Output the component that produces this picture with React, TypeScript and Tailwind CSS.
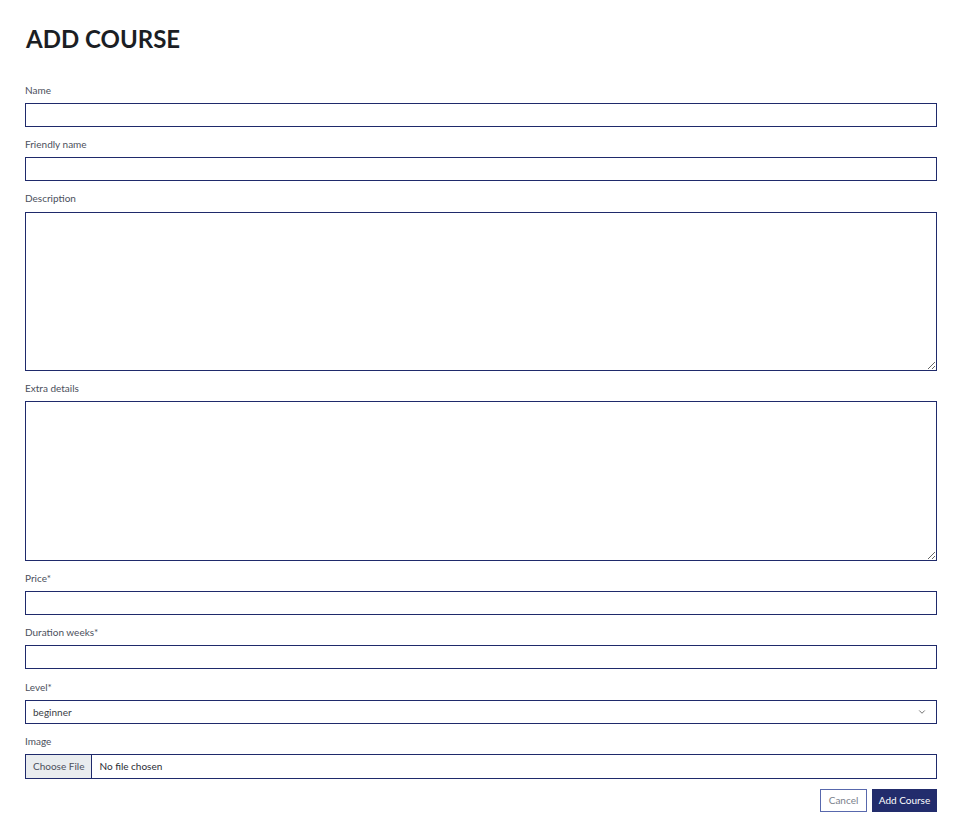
import { ChevronDown } from "lucide-react";

const font = { fontFamily: "Lato, 'Noto Sans', sans-serif" };

function Label({ children, extra = "" }: { children: React.ReactNode; extra?: string }) {
  return <label className={`block text-[10px] leading-[13px] text-[#4b4f5c] mb-[6px] ${extra}`}>{children}</label>;
}

function TextField({ label }: { label: string }) {
  return (
    <div className="mb-[11px]">
      <Label>{label}</Label>
      <input type="text" className="block w-full h-[24px] border border-[#1f2a6b] bg-white px-2 text-[11px] outline-none" />
    </div>
  );
}

function TextArea({ label, h, extra = "" }: { label: string; h: string; extra?: string }) {
  return (
    <div className="mb-[11px]">
      <Label extra={extra}>{label}</Label>
      <textarea className={`block w-full ${h} border border-[#1f2a6b] bg-white px-2 py-1 text-[11px] outline-none resize-y`} />
    </div>
  );
}

export default function App() {
  return (
    <div className="min-h-screen bg-white text-[#212529]" style={font}>
      <div className="px-[25px] pt-[24px] w-[962px]">
        <h1 className="text-[24px] leading-[30px] font-bold text-[#1b1e24] mb-[30px] pl-[1px]">ADD COURSE</h1>
        <form>
          <TextField label="Name" />
          <TextField label="Friendly name" />
          <TextArea label="Description" h="h-[159px]" extra="pb-[1px]" />
          <TextArea label="Extra details" h="h-[160px]" />
          <TextField label="Price*" />
          <TextField label="Duration weeks*" />
          <div className="mb-[11px] pt-[1px]">
            <Label>Level*</Label>
            <div className="flex items-center justify-between w-full h-[24px] border border-[#1f2a6b] bg-white pl-[7px] pr-[9px]">
              <span className="text-[10px] text-[#3a3d46]">beginner</span>
              <ChevronDown className="w-[10px] h-[10px] text-[#555]" strokeWidth={2} />
            </div>
          </div>
          <div className="mb-[10px]">
            <Label>Image</Label>
            <div className="flex items-stretch w-full h-[25px] border border-[#1f2a6b] bg-white">
              <span className="flex items-center px-[7px] bg-[#e9ecef] border-r border-[#1f2a6b] text-[10px] text-[#4b4f5c]">Choose File</span>
              <span className="flex items-center pl-[7px] text-[10px] text-[#2a2d36]">No file chosen</span>
            </div>
          </div>
          <div className="flex justify-end gap-[5px]">
            <button type="button" className="h-[23px] w-[47px] border border-[#5868ad] bg-white text-[10px] text-[#7a7f8c]">Cancel</button>
            <button type="button" className="h-[23px] w-[65px] bg-[#222c6c] text-[10px] text-white">Add Course</button>
          </div>
        </form>
      </div>
    </div>
  );
}
